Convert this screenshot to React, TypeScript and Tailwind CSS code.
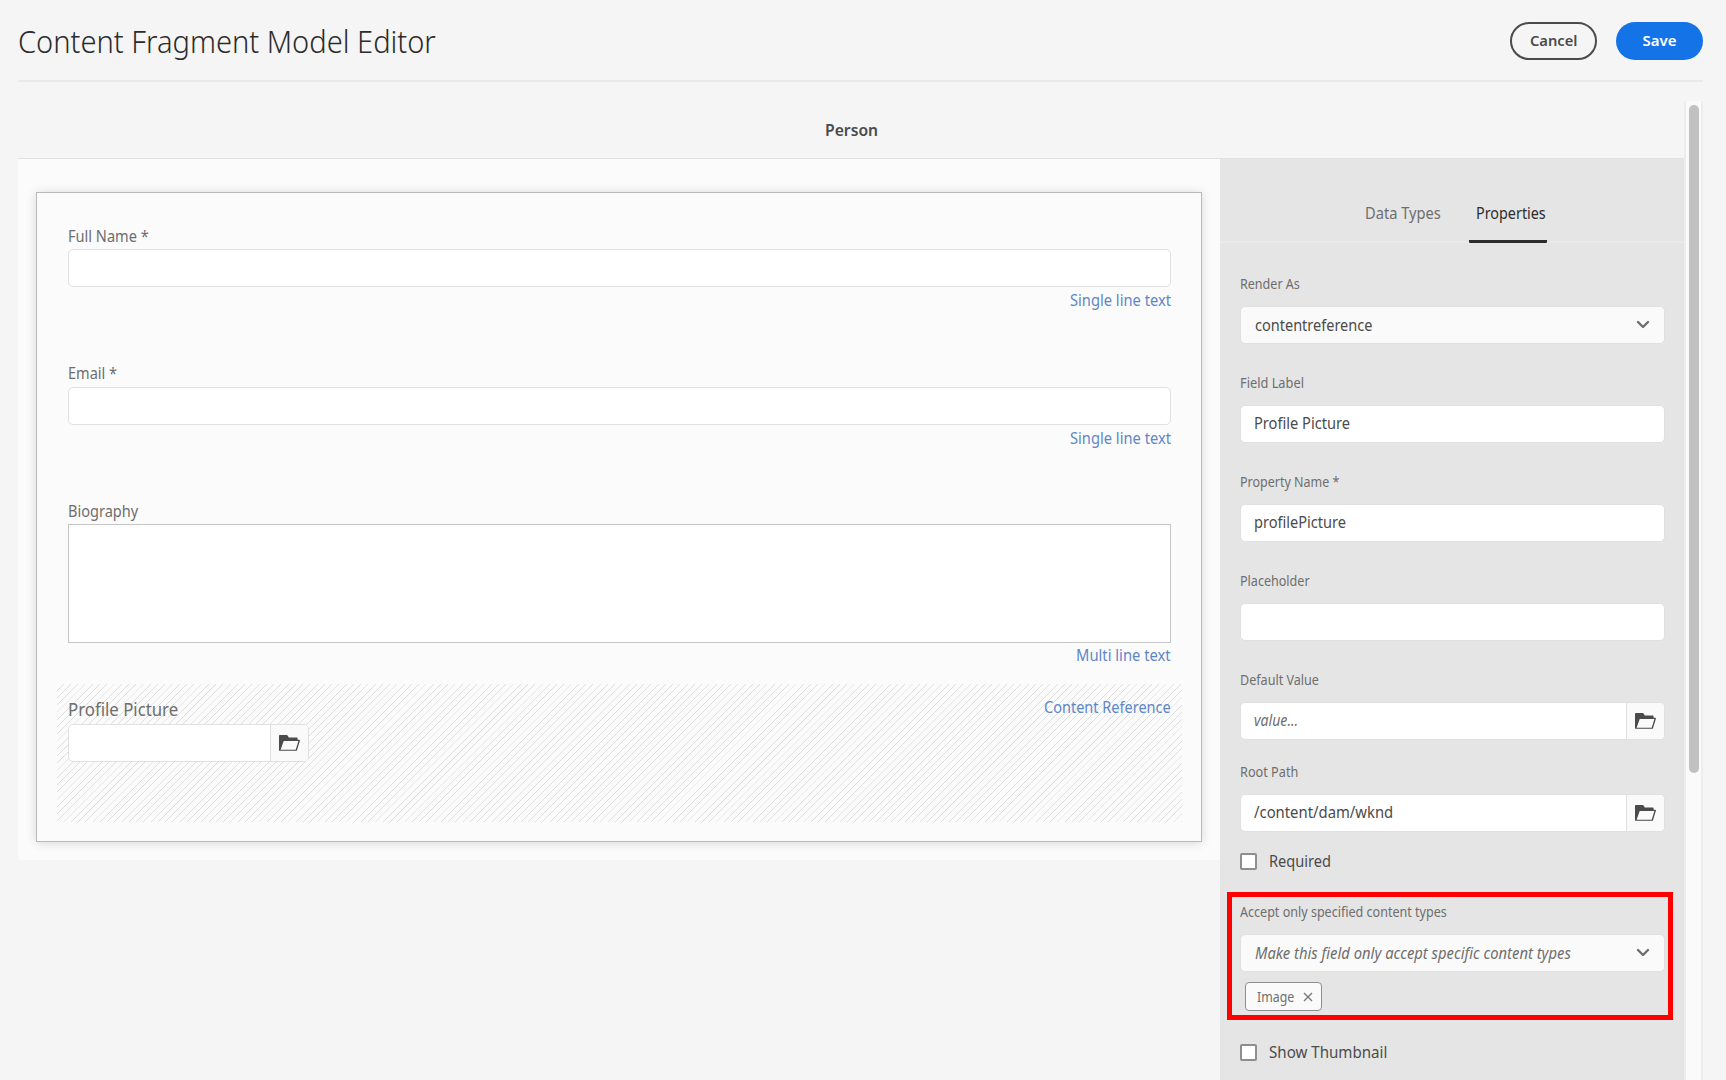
import { useLayoutEffect, useRef, useState, type ReactNode } from "react";

type TextProps = { children: string; width: number; className?: string };

/** Single-line text condensed to a given width. */
function Text({ children, width, className = "" }: TextProps) {
  const ref = useRef<HTMLSpanElement>(null);
  const [scale, setScale] = useState(1);
  useLayoutEffect(() => {
    if (ref.current) setScale(width / ref.current.offsetWidth);
  }, [width, children]);
  return (
    <span className={`block shrink-0 whitespace-nowrap ${className}`} style={{ width }}>
      <span ref={ref} className="inline-block origin-left" style={{ transform: `scaleX(${scale})` }}>
        {children}
      </span>
    </span>
  );
}

function FolderIcon() {
  return (
    <svg width="21" height="16" viewBox="0 0 21 16" className="shrink-0">
      <path
        fillRule="evenodd"
        fill="#4b4b4b"
        d="M.8 0h6.9c.4 0 .7.2.9.5l1.2 1.9h8c.5 0 .8.3.8.8v1.5h1.6c.6 0 .9.4.7 1l-2.9 9.5c-.1.4-.4.6-.8.6H.6c-.4 0-.6-.3-.6-.6V.8C0 .3.3 0 .8 0Zm3.9 5.9L1.6 14.8h15.1l2.7-8.9Z"
      />
    </svg>
  );
}

function Chevron() {
  return (
    <svg width="14" height="10" viewBox="0 0 14 10" className="shrink-0">
      <path d="M2 2l5 5 5-5" fill="none" stroke="#6e6e6e" strokeWidth="2.4" strokeLinecap="round" strokeLinejoin="round" />
    </svg>
  );
}

function FormField({ label, width, labelHeight, height }: { label: string; width: number; labelHeight: string; height: string }) {
  return (
    <div className={height}>
      <Text width={width} className={`leading-5 text-[#6e6e6e] ${labelHeight}`}>{label}</Text>
      <div className="h-[38px] rounded-[5px] border border-[#e1e1e1] bg-white" />
      <div className="mt-[3px] flex justify-end leading-5 text-[#5f87c8]">
        <Text width={101}>Single line text</Text>
      </div>
    </div>
  );
}

type PropertyProps = { label: string; width: number; height: string; children?: ReactNode; select?: boolean; end?: ReactNode };

function Property({ label, width, height, children, select, end }: PropertyProps) {
  return (
    <div className={height}>
      <Text width={width} className="h-[32px] text-[14px] leading-5 text-[#6e6e6e]">{label}</Text>
      <div className={`flex h-[38px] w-[425px] overflow-hidden rounded-[5px] border border-[#e0e0e0] ${select ? "bg-[#fafafa]" : "bg-white"}`}>
        <div className={`flex flex-1 items-center text-[#4b4b4b] ${select ? "pl-[14px]" : "pb-[2px] pl-[13px]"}`}>{children}</div>
        {end}
      </div>
    </div>
  );
}

const FolderButton = () => (
  <div className="flex w-[38px] items-center justify-center border-l border-[#e1e1e1] bg-[#fafafa] pb-px">
    <FolderIcon />
  </div>
);

const ChevronEnd = () => (
  <div className="flex w-[28px] items-center">
    <Chevron />
  </div>
);

function Check({ label, width }: { label: string; width: number }) {
  return (
    <div className="flex h-5 items-center">
      <div className="h-[17px] w-[17px] rounded-[2px] border-2 border-[#8e8e8e] bg-white" />
      <Text width={width} className="ml-3 leading-5 text-[#4b4b4b]">{label}</Text>
    </div>
  );
}

export default function App() {
  return (
    <div className="flex h-[1080px] w-[1726px] flex-col overflow-hidden bg-[#f5f5f5] pr-[23px] pl-[18px] font-['Noto_Sans',sans-serif] text-[16px]">
      <header className="flex h-[82px] shrink-0 items-start justify-between border-b-2 border-[#eaeaea]">
        <Text width={418} className="mt-[20px] text-[32px] leading-[42px] font-light text-[#2c2c2c]">Content Fragment Model Editor</Text>
        <div className="mt-[22px] flex gap-[19px] font-semibold">
          <button className="flex h-[38px] w-[87px] items-center justify-center rounded-full border-2 border-[#4b4b4b] pb-[2px] text-[15px] text-[#4b4b4b]">
            <Text width={47}>Cancel</Text>
          </button>
          <button className="flex h-[38px] w-[87px] items-center justify-center rounded-full bg-[#1473e6] pb-[2px] text-[15px] text-white">
            <Text width={34}>Save</Text>
          </button>
        </div>
      </header>

      <div className="mt-[19px] flex min-h-0 flex-1">
        <div className="w-[1666px]">
          <div className="flex h-[58px] justify-center border-b border-[#e1e1e1] pt-[19px] font-semibold text-[#4b4b4b]">
            <Text width={53} className="leading-5">Person</Text>
          </div>
          <div className="flex h-[921px]">
            <main className="h-[701px] w-[1202px] bg-[#fbfbfb] pt-[33px] pl-[18px]">
              <section className="h-[650px] w-[1166px] border border-[#b9b9b9] bg-[#fbfbfb] pt-[33px] pr-[30px] pl-[31px] shadow-[0_1px_10px_rgba(0,0,0,0.14)]">
                <FormField label="Full Name *" width={81} labelHeight="h-[23px]" height="h-[137px]" />
                <FormField label="Email *" width={49} labelHeight="h-[24px]" height="h-[138px]" />
                <Text width={70} className="h-[23px] leading-5 text-[#6e6e6e]">Biography</Text>
                <div className="h-[119px] border border-[#c6c6c6] bg-white" />
                <div className="mt-[2px] flex justify-end leading-5 text-[#5f87c8]">
                  <Text width={95}>Multi line text</Text>
                </div>
                <div className="mt-[19px] -mr-[11px] -ml-[11px] h-[138px] bg-[repeating-linear-gradient(135deg,transparent_0,transparent_4.3px,#dedede_4.5px,#dedede_5px,transparent_5.13px)] px-[11px] pt-[13px]">
                  <div className="flex h-[27px] justify-between">
                    <Text width={110} className="text-[18px] leading-6 text-[#6e6e6e]">Profile Picture</Text>
                    <Text width={127} className="leading-5 text-[#5f87c8]">Content Reference</Text>
                  </div>
                  <div className="flex h-[38px] w-[241px] overflow-hidden rounded-[5px] border border-[#e1e1e1] bg-white">
                    <div className="flex-1" />
                    <FolderButton />
                  </div>
                </div>
              </section>
            </main>

            <aside className="h-full w-[464px] bg-[#e5e5e5]">
              <div className="flex h-[84px] border-b-2 border-[#e9e9e9] pt-[44px] pl-[145px] leading-5">
                <Text width={76} className="text-[#6e6e6e]">Data Types</Text>
                <div className="ml-[28px] h-[40px] w-[78px] rounded-[1px] border-b-[3px] border-[#2c2c2c] pl-[7px]">
                  <Text width={70} className="text-[#2c2c2c]">Properties</Text>
                </div>
              </div>
              <div className="pt-[31px] pl-[20px]">
                <Property label="Render As" width={60} height="h-[99px]" select end={<ChevronEnd />}>
                  <Text width={117}>contentreference</Text>
                </Property>
                <Property label="Field Label" width={64} height="h-[99px]">
                  <Text width={96}>Profile Picture</Text>
                </Property>
                <Property label="Property Name *" width={99} height="h-[99px]">
                  <Text width={92}>profilePicture</Text>
                </Property>
                <Property label="Placeholder" width={70} height="h-[99px]" />
                <Property label="Default Value" width={79} height="h-[92px]" end={<FolderButton />}>
                  <Text width={44} className="text-[#6e6e6e] italic">value...</Text>
                </Property>
                <Property label="Root Path" width={58} height="h-[89px]" end={<FolderButton />}>
                  <Text width={139}>/content/dam/wknd</Text>
                </Property>
                <Check label="Required" width={62} />
                <div className="mt-[21px] -ml-[13px] h-[128px] w-[446px] border-[5px] border-[#ff0000] pt-[5px] pl-[8px]">
                  <Property label="Accept only specified content types" width={207} height="h-[80px]" select end={<ChevronEnd />}>
                    <Text width={316} className="text-[#6e6e6e] italic">Make this field only accept specific content types</Text>
                  </Property>
                  <div className="ml-[5px] flex h-[29px] w-[77px] items-center rounded-[4px] border border-[#8e8e8e] bg-[#fafafa] pl-[11px]">
                    <Text width={37} className="text-[14px] leading-5 text-[#6e6e6e]">Image</Text>
                    <svg width="10" height="10" viewBox="0 0 10 10" className="ml-[9px] shrink-0">
                      <path d="M1 1l8 8M9 1L1 9" stroke="#7a7a7a" strokeWidth="1.4" />
                    </svg>
                  </div>
                </div>
                <div className="mt-[22px]">
                  <Check label="Show Thumbnail" width={118} />
                </div>
              </div>
            </aside>
          </div>
        </div>
        <div className="flex w-[19px] justify-center border-x-2 border-[#ededed] bg-[#fafafa] pt-[4px]">
          <div className="h-[668px] w-[10px] rounded-full bg-[#c1c1c1]" />
        </div>
      </div>
    </div>
  );
}
